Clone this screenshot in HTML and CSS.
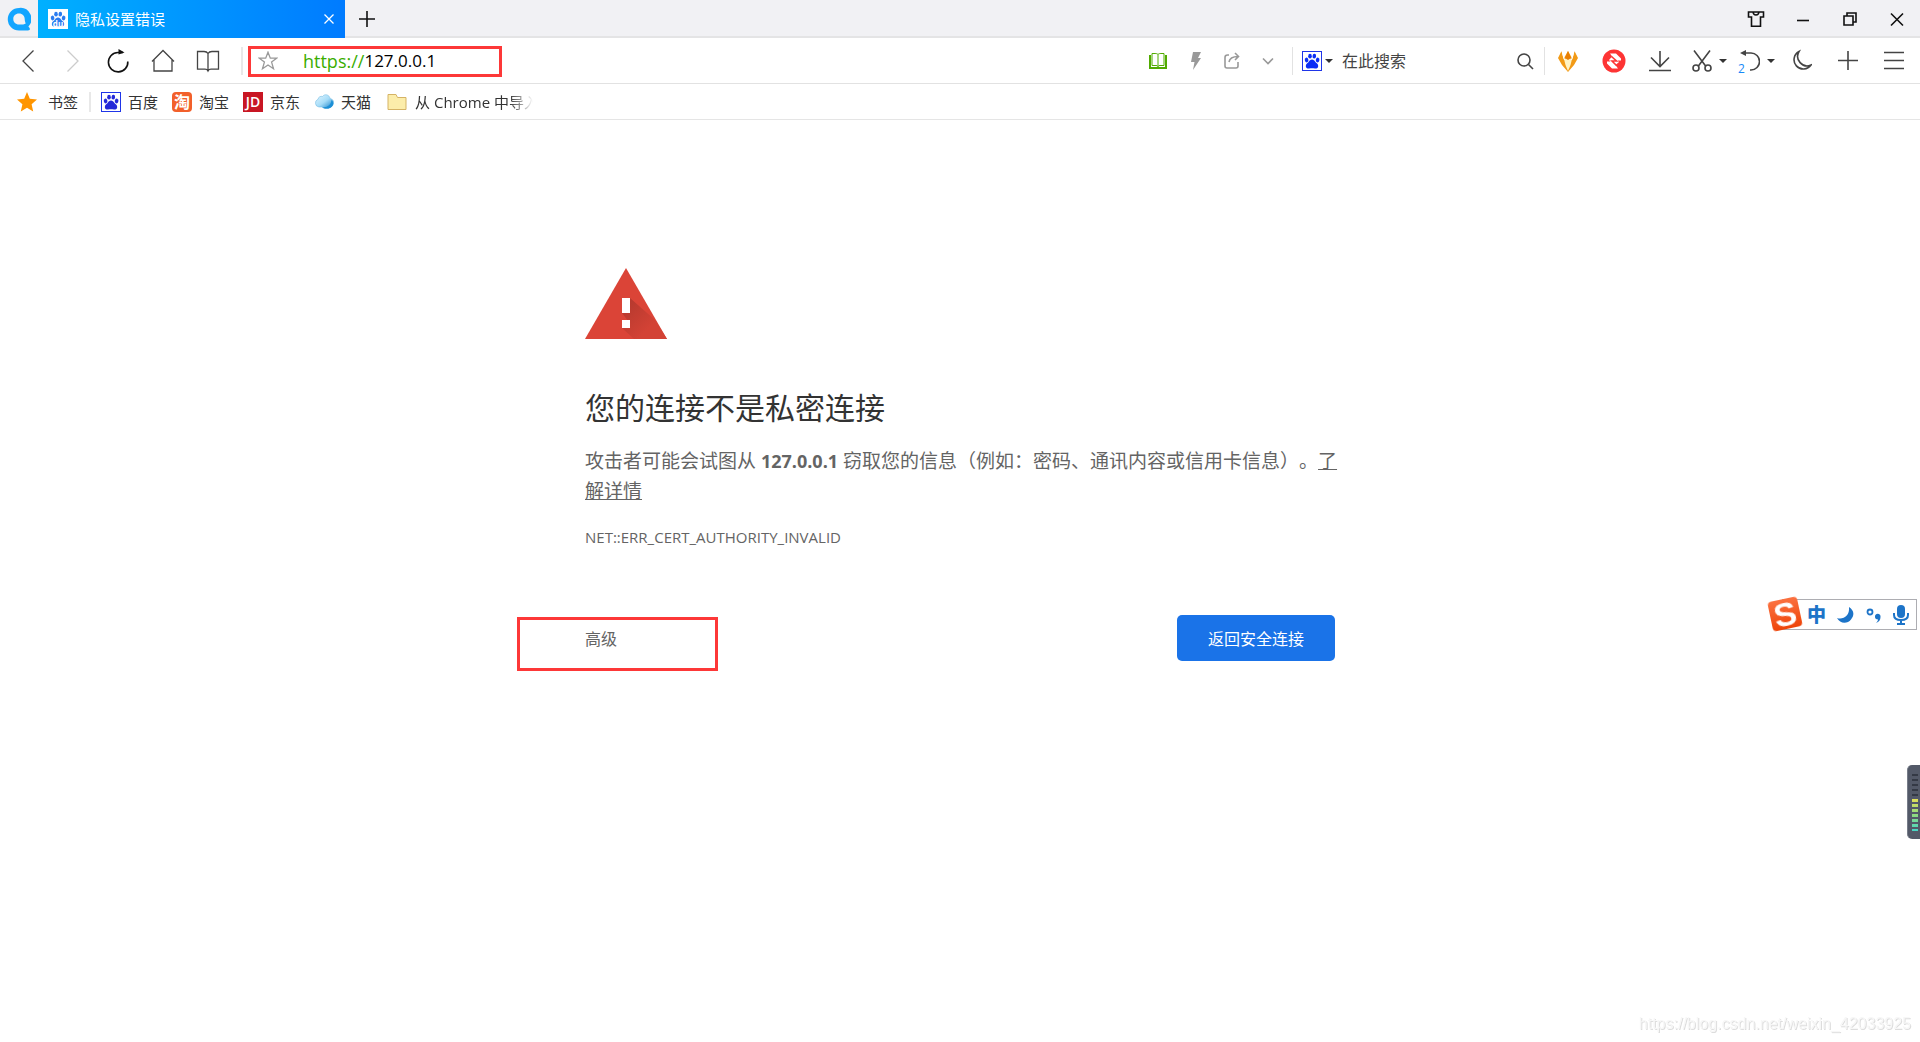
FILE: index.html
```html
<!DOCTYPE html>
<html lang="zh-CN">
<head>
<meta charset="utf-8">
<title>隐私设置错误</title>
<link rel="stylesheet" href="styles.css">
</head>
<body>
<svg class="defs" aria-hidden="true">
  <symbol id="paw" viewBox="0 0 20 20">
    <ellipse cx="4.6" cy="9" rx="1.8" ry="2.4" transform="rotate(-15 4.6 9)"/>
    <ellipse cx="8" cy="5.2" rx="1.8" ry="2.4"/>
    <ellipse cx="12.3" cy="5.2" rx="1.8" ry="2.4" transform="rotate(8 12.3 5.2)"/>
    <ellipse cx="15.6" cy="9" rx="1.8" ry="2.4" transform="rotate(15 15.6 9)"/>
    <path d="M10 8.6c1.600 0 2.400 1 3.200 2.200 1 1.200 3 2.200 3 4.200 0 2-1.700 2.700-3.200 2.500-1.200-.2-2-.3-3-.3s-1.800.1-3 .3c-1.500.2-3.200-.5-3.200-2.500 0-2 2-3 3-4.200C7.600 9.600 8.400 8.600 10 8.600z"/>
  </symbol>
</svg>

<header class="chrome">
  <div class="titlebar">
    <button class="brand" aria-label="QQ浏览器">
      <svg width="24" height="24" viewBox="0 0 24 24"><path fill="#12a5ff" fill-rule="evenodd" d="M12 1a11 11 0 1 0 0 22.500h9c2 0 2.400-1.500 1.400-2.700l-1-1.300A11 11 0 0 0 12 1zM12 6.500c3.600 0 5.700 2.500 5.700 5.500 0 2 .6 3 1 4.400-1 .9-3.400 1.100-6.700 1.100-3.400 0-5.700-2.400-5.700-5.500S8.400 6.500 12 6.500z"/></svg>
    </button>
    <div class="tab">
      <span class="favicon favicon-tab"><svg width="20" height="20" fill="#2b7cf0"><use href="#paw"/></svg><span class="du">du</span></span>
      <span class="tab-title">隐私设置错误</span>
      <button class="tab-close" aria-label="关闭标签页"><svg width="12" height="12" viewBox="0 0 12 12" class="line"><path d="M1.500 1.500l9 9M10.500 1.500l-9 9"/></svg></button>
    </div>
    <button class="new-tab" aria-label="新标签页"><svg width="18" height="18" viewBox="0 0 18 18" class="line thick"><path d="M9 1v16M1 9h16"/></svg></button>
    <div class="window-buttons">
      <button aria-label="皮肤"><svg width="18" height="18" viewBox="0 0 18 18" class="line thick"><path d="M1.500 2h15v5h-3v9.200h-9V7h-3zM6 2c.5 4 5.500 4 6 0"/></svg></button>
      <button aria-label="最小化"><svg width="14" height="18" viewBox="0 0 14 18" class="line thick"><path d="M1 10.500h12"/></svg></button>
      <button aria-label="还原"><svg width="14" height="18" viewBox="0 0 14 18" class="line thick"><path d="M1 6h9v9H1zM4 6V3h9v9h-3"/></svg></button>
      <button aria-label="关闭"><svg width="14" height="18" viewBox="0 0 14 18" class="line thick"><path d="M1 3.500l12 12M13 3.500l-12 12"/></svg></button>
    </div>
  </div>

  <div class="toolbar">
    <nav class="nav-buttons">
      <button aria-label="后退"><svg width="24" height="24" viewBox="0 0 24 24" class="line"><path d="M17.500 1.500L7 12l10.500 10.500"/></svg></button>
      <button aria-label="前进" class="off"><svg width="24" height="24" viewBox="0 0 24 24" class="line"><path d="M6.500 1.500L17 12 6.500 22.500"/></svg></button>
      <button aria-label="刷新" class="dark"><svg width="24" height="24" viewBox="0 0 24 24" class="line thick"><path d="M17 3.500h-5a9.700 9.700 0 1 0 9.800 9"/><path d="M12.500 0l6 3.500-6 2z" fill="currentColor" stroke="none"/></svg></button>
      <button aria-label="主页"><svg width="24" height="24" viewBox="0 0 24 24" class="line"><path d="M1 12.500L12 1.500l11 11M3 10.500V22h18V10.500"/></svg></button>
      <button aria-label="收藏"><svg width="24" height="24" viewBox="0 0 24 24" class="line"><path d="M12 4.500C11 2.800 9.500 2.500 8 2.500H1.500v17.700H9c1.500 0 2.300.3 3 1.800.7-1.500 1.500-1.800 3-1.800h7.500V2.500H16c-1.500 0-3 .3-4 2zV21"/></svg></button>
    </nav>
    <div class="address">
      <button class="fav-star" aria-label="添加收藏"><svg width="20" height="20" viewBox="0 0 20 20" class="line"><path d="M10 1.200l2.300 6h6.300l-5 3.900 1.900 6.700L10 14l-5.500 3.800 1.900-6.700-5-3.900h6.300z"/></svg></button>
      <label class="scheme" for="url">https://</label>
      <input class="url" id="url" type="text" value="127.0.0.1">
      <div class="mark mark-address"></div>
      <div class="page-actions">
        <button class="green" aria-label="阅读模式"><svg width="20" height="18" viewBox="0 0 20 18" fill="none" stroke="currentColor"><path stroke-width="2" d="M2 3v13h16V3"/><path d="M10 2.500C9 1.500 8.300 1.500 7 1.500H4v12h4c1 0 1.500.2 2 1 .5-.8 1-1 2-1h4v-12h-3c-1.300 0-2 0-3 1zV15"/></svg></button>
        <button aria-label="加速"><svg width="12" height="18" viewBox="0 0 12 18" fill="currentColor"><path d="M3 0h8L8 6h3L3 18l1.500-8H1z"/></svg></button>
        <button aria-label="分享"><svg width="16" height="18" viewBox="0 0 16 18" class="line thick"><path d="M5 3H3.500C2 3 1 4 1 5.500V14c0 1.300.8 2 2 2h9c1.200 0 2-.7 2-2v-4M5 10c.5-3 3-5.500 9-5.500M11 1l3.500 3.500L11 8"/></svg></button>
        <button aria-label="更多"><svg width="12" height="18" viewBox="0 0 12 18" class="line thick"><path d="M1 6.500l5 5 5-5"/></svg></button>
      </div>
    </div>
    <form class="search">
      <button type="button" class="engine" aria-label="百度搜索"><span class="favicon favicon-blue"><svg width="20" height="20" fill="#0a2df5"><use href="#paw"/></svg></span><i class="caret"></i></button>
      <input type="text" placeholder="在此搜索" aria-label="搜索">
      <button class="go" type="button" aria-label="搜索"><svg width="18" height="18" viewBox="0 0 18 18" class="line thick"><circle cx="8" cy="8" r="6"/><path d="M12.500 12.500L17 17"/></svg></button>
    </form>
    <div class="tools">
      <button aria-label="插件"><svg width="22" height="24" viewBox="0 0 22 24"><path fill="#f29a16" d="M1 9l3.500-7 2 8L11 2l4.500 8 2-8L21 9l-4 7-6 7-6-7z"/><path fill="#fff3c4" d="M7 10l4-1 4 1-1.500 6L11 22l-2.500-6z"/><path fill="#e87e04" d="M8 9l3-7 3 7-3 2z"/><path stroke="#fff" d="M5 2l2.500 9M17 2l-2.500 9"/></svg></button>
      <button aria-label="广告拦截"><svg width="24" height="24" viewBox="0 0 24 24"><circle cx="12" cy="12" r="11.500" fill="#fd3434"/><path fill="#fff" d="M8 4.500h6l5 5v2h-3.500l1.500 1.500-3.500 3-4-4h2.500V10zM16 19.500h-6l-5-5v-2h3.500L7 11l3-3.500 4.500 4.500H12v2z"/><path fill="none" stroke="#fd3434" stroke-width="1.600" d="M9.500 7.500l5 4.500h-4.500l4.500 4.500"/></svg></button>
      <button aria-label="下载"><svg width="22" height="24" viewBox="0 0 22 24" class="line thick"><path d="M11 2v15M2 8.500l9 9 9-9M0 21.500h22"/></svg></button>
      <button class="wide" aria-label="截图"><svg width="20" height="24" viewBox="0 0 20 24" class="line thick"><path d="M2 1.500l12 16M18 1.500l-12 16"/><circle cx="4" cy="19" r="3"/><circle cx="16" cy="19" r="3"/></svg><i class="caret"></i></button>
      <button class="wide undo" aria-label="恢复标签页"><svg width="20" height="24" viewBox="0 0 20 24" class="line thick"><path d="M4 4h7a8 8 0 0 1 0 17h-1"/><path d="M0 4l6-3v6z" fill="currentColor" stroke="none"/></svg><span class="count">2</span><i class="caret"></i></button>
      <button aria-label="夜间模式"><svg width="20" height="24" viewBox="0 0 20 24" class="line thick"><path d="M7 2.500A9.300 9.300 0 1 0 19 16 9.500 9.500 0 0 1 7 2.500z"/></svg></button>
      <button aria-label="添加"><svg width="20" height="24" viewBox="0 0 20 24" class="line thick"><path d="M10 2v19M0 11.500h20"/></svg></button>
      <button aria-label="菜单"><svg width="20" height="24" viewBox="0 0 20 24" class="line thick"><path d="M0 3.500h20M0 11.500h20M0 19.500h20"/></svg></button>
    </div>
  </div>

  <nav class="bookmarks">
    <a href="#" class="bookmark-root"><svg width="20" height="20" viewBox="0 0 20 20" fill="#ff9500"><path d="M10 0l2.800 6.700 7.200.7-5.400 4.800 1.600 7.300L10 15.700l-6.200 3.800 1.600-7.300L0 7.400l7.200-.7z"/></svg>书签</a>
    <a href="#"><span class="favicon favicon-blue"><svg width="20" height="20" fill="#2529d8"><use href="#paw"/></svg></span>百度</a>
    <a href="#"><span class="favicon favicon-tao">淘</span>淘宝</a>
    <a href="#"><span class="favicon favicon-jd">JD</span>京东</a>
    <a href="#"><svg width="20" height="20" viewBox="0 0 20 20"><defs><linearGradient id="cloud" x2="1" y2="1"><stop stop-color="#e3f6ff"/><stop offset=".5" stop-color="#a5dcf8"/><stop offset="1" stop-color="#0879c4"/></linearGradient></defs><path fill="url(#cloud)" stroke="#79bde4" stroke-width=".6" d="M5 15a4 4 0 0 1-1-7.700C4.500 4.500 7 4 8.500 4.500c2-3 7-2 7.500 2 3 .5 4 3 3.500 5-.5 3-4 5-7 5-2 0-3.500-.5-4.500-1.500z"/><path fill="#1c8fd6" d="M8 15c5 1 9-2 9.500-7 3 2 2.500 8-4.500 8.500-2 .2-4-.5-5-1.500z"/></svg>天猫</a>
    <a href="#" class="folder"><svg width="20" height="20" viewBox="0 0 20 20"><path fill="#fcedaa" stroke="#d5b365" d="M1 2.500h8l1.500 3H19v12H1z"/></svg><span class="folder-name">从 Chrome 中导入</span></a>
  </nav>
</header>

<main class="interstitial">
  <svg class="warning" width="82" height="72" viewBox="0 0 82 72" role="img" aria-label="警告">
    <defs><linearGradient id="shade" gradientUnits="userSpaceOnUse" x1="40" y1="40" x2="62" y2="62"><stop stop-color="#b83a2f"/><stop offset="1" stop-color="#d34235"/></linearGradient></defs>
    <path fill="#db4437" d="M41 0l41 71H0z"/>
    <path fill="url(#shade)" d="M45 30l25 22 12 19H49L37 60l6-7-6-8z"/>
    <path fill="#fff" d="M37 30h8v15h-8zM37 52h8v8h-8z"/>
  </svg>
  <h1>您的连接不是私密连接</h1>
  <p class="message">攻击者可能会试图从 <strong>127.0.0.1</strong> 窃取您的信息（例如：密码、通讯内容或信用卡信息）。<a href="#">了解详情</a></p>
  <p class="code">NET::ERR_CERT_AUTHORITY_INVALID</p>
  <div class="actions">
    <button class="advanced">高级</button>
    <button class="primary">返回安全连接</button>
    <div class="mark mark-advanced"></div>
  </div>
</main>

<aside class="ime">
  <svg class="ime-logo" width="38" height="38" viewBox="0 0 38 38"><defs><linearGradient id="sogou" x2="0" y2="1"><stop stop-color="#fb7140"/><stop offset="1" stop-color="#ee4409"/></linearGradient></defs><g transform="rotate(-12 19 19)"><rect x="4" y="4" width="30" height="30" rx="4" fill="url(#sogou)"/><text x="19" y="31" text-anchor="middle" class="ime-s">S</text></g></svg>
  <button class="ime-lang">中</button>
  <button aria-label="半角"><svg width="18" height="18" viewBox="0 0 18 18" fill="currentColor"><path d="M12 1c6 4 5 9 2 12.500C10.500 18 3 18 0 12c6 2 13-2 12-11z"/></svg></button>
  <button aria-label="标点"><svg width="16" height="18" viewBox="0 0 16 18"><circle cx="4" cy="6" r="2.500" fill="none" stroke="currentColor" stroke-width="1.800"/><path fill="currentColor" d="M9 11a2.800 2.800 0 1 1 5.500 0c0 3-1.500 5-4.500 6 1.500-1.500 2-2.500 2-3.500-2 0-3-1-3-2.500z"/></svg></button>
  <button aria-label="语音"><svg width="16" height="20" viewBox="0 0 16 20"><rect x="4" y="0" width="8" height="13" rx="4" fill="currentColor"/><path fill="none" stroke="currentColor" stroke-width="2" d="M1 8v2c0 3 2.500 5 7 5s7-2 7-5V8M8 15v4M4 19h8"/></svg></button>
</aside>
<div class="level"><div class="level-idle"></div><div class="level-active"></div></div>
<div class="watermark">https://blog.csdn.net/weixin_42033925</div>
</body>
</html>
```
FILE: styles.css
```css
* { box-sizing: border-box; }

body {
  margin: 0;
  min-height: 100vh;
  background: #fff;
  color: #333;
  font-family: "Open Sans", "Noto Sans CJK SC", sans-serif;
  font-size: 15px;
}

button, input {
  margin: 0;
  padding: 0;
  border: 0;
  background: none;
  color: inherit;
  font: inherit;
}

button {
  display: flex;
  align-items: center;
  justify-content: center;
  flex: none;
}

svg { display: block; flex: none; }
.defs { position: absolute; width: 0; height: 0; }
.line { fill: none; stroke: currentColor; stroke-width: 1.300; }
.thick { stroke-width: 1.600; }

.caret {
  flex: none;
  border: 4px solid transparent;
  border-top-color: #333;
  border-bottom: 0;
}

.favicon {
  position: relative;
  display: flex;
  align-items: center;
  justify-content: center;
  flex: none;
  width: 20px;
  height: 20px;
  color: #fff;
}
.favicon-tab { background: #fff; }
.favicon-blue { border: 1px solid #1f35e8; background: #fff; }
.favicon-tao { border-radius: 4px; background: #f2602b; font-size: 16px; font-weight: 700; line-height: 20px; }
.favicon-jd { background: #c81623; font-size: 14px; font-weight: 600; }
.du { position: absolute; left: 0; right: 0; bottom: 1px; text-align: center; font-size: 8px; line-height: 8px; font-weight: 700; }

/* Title bar */
.titlebar {
  display: flex;
  height: 38px;
  background: #f1f1f4;
  box-shadow: inset 0 -2px #e4e4e5;
  color: #111;
}
.brand { width: 38px; }
.tab {
  display: flex;
  align-items: center;
  width: 307px;
  padding: 0 10px;
  background: linear-gradient(90deg, #00b0ff, #007bff);
  color: #fff;
}
.tab-title { flex: 1; margin-left: 7px; padding-bottom: 2px; }
.new-tab { width: 44px; padding-bottom: 1px; }
.window-buttons { display: flex; margin-left: auto; }
.window-buttons button { width: 47px; }

/* Toolbar */
.toolbar {
  display: flex;
  align-items: center;
  height: 46px;
  border-bottom: 1px solid #e2e2e2;
  color: #444;
}
.nav-buttons {
  display: flex;
  align-items: center;
  height: 28px;
  padding: 0 11px 0 5px;
  border-right: 2px solid #e8e8e8;
}
.nav-buttons button { width: 45px; }
.off { color: #ccc; }
.dark { color: #111; }
.address {
  position: relative;
  display: flex;
  align-items: center;
  flex: 1;
  min-width: 0;
  height: 45px;
  padding-left: 15px;
}
.fav-star { margin-right: 25px; color: #999; }
.scheme { color: #3aad00; font-size: 18px; line-height: 28px; }
.url { flex: 1; min-width: 0; height: 28px; color: #000; font-size: 17px; }
.page-actions { display: flex; gap: 22px; margin-right: 18px; color: #999; }
.green { color: #51ab00; }

.mark { position: absolute; border: 3px solid #fd3838; pointer-events: none; }
.mark-address { left: 5px; top: 8px; width: 254px; height: 31px; }

.search {
  display: flex;
  align-items: center;
  width: 253px;
  height: 28px;
  border: solid #e2e2e2;
  border-width: 0 1px;
}
.engine { gap: 3px; margin: 0 9px; }
.search input { flex: 1; min-width: 0; font-size: 16px; }
.search input::placeholder { color: #444; opacity: 1; }
.go { width: 38px; }

.tools { display: flex; align-items: center; padding-right: 3px; }
.tools button { width: 46px; }
.tools button.wide { width: 48px; gap: 7px; padding-left: 4px; }
.undo { position: relative; }
.count { position: absolute; left: 7px; bottom: -3px; color: #1689f8; font-size: 12px; line-height: 14px; }

/* Bookmarks bar */
.bookmarks {
  display: flex;
  align-items: center;
  gap: 14px;
  height: 36px;
  padding-left: 17px;
  border-bottom: 1px solid #e5e5e5;
}
.bookmarks a {
  display: flex;
  align-items: center;
  gap: 7px;
  color: #333;
  line-height: 20px;
  text-decoration: none;
}
.bookmarks .bookmark-root {
  gap: 11px;
  margin-right: -4px;
  padding-right: 11px;
  border-right: 2px solid #e8e8e8;
}
.bookmarks .folder { gap: 8px; padding-left: 2px; }
.folder-name {
  width: 118px;
  overflow: hidden;
  white-space: nowrap;
  -webkit-mask-image: linear-gradient(90deg, #000 80%, transparent);
  mask-image: linear-gradient(90deg, #000 80%, transparent);
}

/* Warning page */
.interstitial {
  max-width: 750px;
  margin: 0 auto;
  padding-top: 148px;
  color: #646464;
}
h1 {
  margin: 47px 0 17px;
  color: #333;
  font-size: 30px;
  font-weight: 400;
  line-height: 42px;
}
.message { margin: 0 -8px 0 0; font-size: 19px; line-height: 30px; text-spacing-trim: space-all; }
.message strong { font-size: 18px; }
.message a { color: inherit; }
.code { margin: 20px 0 0; line-height: 22px; }
.actions {
  position: relative;
  display: flex;
  align-items: center;
  justify-content: space-between;
  margin-top: 67px;
  font-size: 16px;
}
.primary { width: 158px; height: 46px; border-radius: 5px; background: #1a73e8; color: #fff; }
.mark-advanced { left: -68px; top: 2px; width: 201px; height: 54px; }

/* Desktop overlays */
.ime {
  position: fixed;
  top: 599px;
  right: 3px;
  display: flex;
  align-items: center;
  gap: 11px;
  height: 31px;
  padding: 0 7px 0 24px;
  border: 1px solid #adadb2;
  background: #fff;
  color: #1d74c8;
}
.ime-logo { position: absolute; left: -17px; top: -5px; }
.ime-s { fill: #fff; font-family: "Liberation Sans", sans-serif; font-size: 34px; font-weight: 700; }
.ime-lang { font-size: 19px; font-weight: 900; line-height: 20px; }
.level {
  position: fixed;
  right: 0;
  top: 765px;
  width: 13px;
  height: 74px;
  padding: 9px 2px 0 4px;
  border-left: 1px solid #777d89;
  border-radius: 5px 0 0 5px;
  background: #535968;
}
.level-idle { height: 25px; background: repeating-linear-gradient(#343945 0 2px, #535968 2px 5px); }
.level-active {
  height: 32px;
  background: repeating-linear-gradient(transparent 0 3px, #535968 3px 5px), linear-gradient(#e2df58, #8edb80 50%, #47d5c5);
}
.watermark {
  position: fixed;
  right: 9px;
  bottom: 8px;
  color: #f7f7f7;
  font: 16px/20px "Liberation Sans", sans-serif;
  text-shadow: 1px 1px #ddd;
}
```
